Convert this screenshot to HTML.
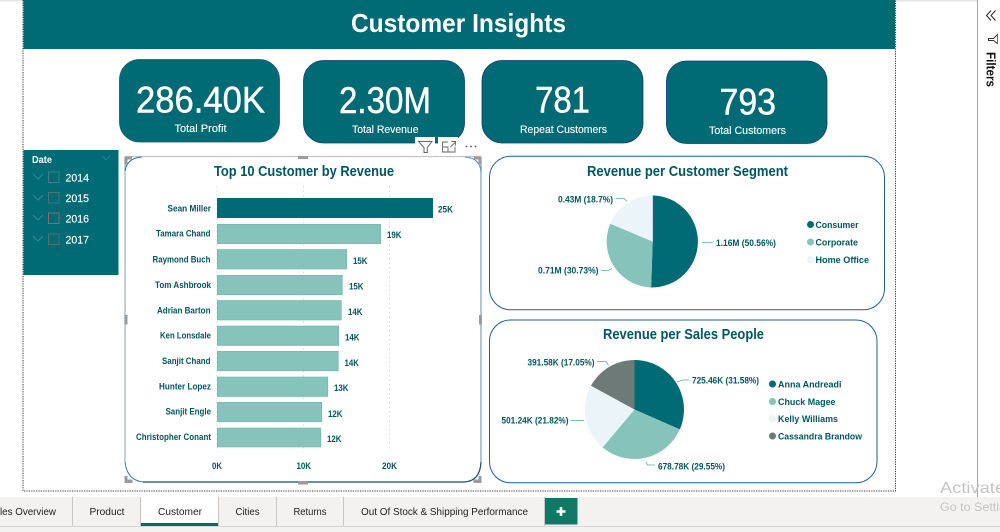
<!DOCTYPE html>
<html><head><meta charset="utf-8"><style>
html,body{margin:0;padding:0;background:#fff;width:1000px;height:532px;overflow:hidden}
svg{display:block;font-family:"Liberation Sans",sans-serif}
.k{fill:#fff;stroke:#fff;stroke-width:.45px;font-size:37px}
.l{fill:#fff;stroke:#fff;stroke-width:.12px;font-size:11px}
.y{fill:#fff;stroke:#fff;stroke-width:.15px;font-size:11px}
.t{fill:#00565f;font-weight:bold;font-size:14.5px}
.n{fill:#00565f;font-weight:bold;font-size:9px}
.v{fill:#00565f;font-weight:bold;font-size:9px}
.tab{fill:#222;font-size:10.5px}
.lead{fill:none;stroke:#5fa9a5;stroke-width:.8}
.grid{stroke:#d5d9d9;stroke-width:1;stroke-dasharray:1.5 3}
.h{fill:#9b9b9b}
</style></head><body>
<svg width="1000" height="532" viewBox="0 0 1000 532" xmlns="http://www.w3.org/2000/svg">
<rect width="1000" height="532" fill="#fff"/>
<rect x="0" y="0" width="23" height="1.5" fill="#e6e6e6"/>
<rect x="895" y="0" width="82" height="1.5" fill="#e6e6e6"/>
<!-- canvas dotted outline -->
<path d="M23 0V491H895.500V0" fill="none" stroke="#333" stroke-width="1" stroke-dasharray="1.2 1.2"/>
<!-- header -->
<rect x="23.500" y="0" width="871.500" height="49" fill="#006b75"/>
<text x="351" y="32" fill="#fff" font-size="26" font-weight="bold" textLength="215" lengthAdjust="spacingAndGlyphs">Customer Insights</text>
<!-- KPI cards -->
<rect x="119.500" y="59.500" width="160" height="82.500" rx="20" fill="#006b75" stroke="#1d4f80" stroke-width=".8"/>
<rect x="303.500" y="60.500" width="161" height="82.500" rx="20" fill="#006b75" stroke="#0c3c78" stroke-width=".8"/>
<rect x="482" y="60.500" width="161" height="82.500" rx="20" fill="#006b75" stroke="#0c3c78" stroke-width=".8"/>
<rect x="666.500" y="61" width="160.500" height="82.500" rx="20" fill="#006b75" stroke="#0c3c78" stroke-width=".8"/>
<text class="k" x="136" y="112.500" textLength="129" lengthAdjust="spacingAndGlyphs">286.40K</text>
<text class="k" x="339" y="113" textLength="92" lengthAdjust="spacingAndGlyphs">2.30M</text>
<text class="k" x="535" y="112.700" textLength="55" lengthAdjust="spacingAndGlyphs">781</text>
<text class="k" x="719.500" y="114.500" textLength="56.500" lengthAdjust="spacingAndGlyphs">793</text>
<text class="l" x="174.500" y="132" textLength="52" lengthAdjust="spacingAndGlyphs">Total Profit</text>
<text class="l" x="352" y="133" textLength="66.500" lengthAdjust="spacingAndGlyphs">Total Revenue</text>
<text class="l" x="520" y="133" textLength="87" lengthAdjust="spacingAndGlyphs">Repeat Customers</text>
<text class="l" x="709" y="134" textLength="77" lengthAdjust="spacingAndGlyphs">Total Customers</text>
<!-- slicer -->
<rect x="23.500" y="150" width="95" height="125" fill="#006b75"/>
<text x="32" y="163" fill="#fff" font-size="10" font-weight="bold" textLength="20" lengthAdjust="spacingAndGlyphs">Date</text>
<path d="M102 156l4 4 4-4" fill="none" stroke="#2c7f86" stroke-width="1"/>
<g fill="none" stroke="#3c878d" stroke-width="1">
<path d="M33 174l5 5 5-5M33 195l5 5 5-5M33 215l5 5 5-5M33 236l5 5 5-5"/>
</g>
<g fill="none" stroke-width="1">
<rect x="48.500" y="172" width="10.500" height="10.500" stroke="#4b7a7f"/>
<rect x="48.500" y="192.500" width="10.500" height="10.500" stroke="#517378"/>
<rect x="48.500" y="213" width="10.500" height="10.500" stroke="#8a6d6b"/>
<rect x="48.500" y="234" width="10.500" height="10.500" stroke="#566f74"/>
</g>
<text class="y" x="65.500" y="181.500" textLength="23.500" lengthAdjust="spacingAndGlyphs">2014</text>
<text class="y" x="65.500" y="202" textLength="23.500" lengthAdjust="spacingAndGlyphs">2015</text>
<text class="y" x="65.500" y="222.500" textLength="23.500" lengthAdjust="spacingAndGlyphs">2016</text>
<text class="y" x="65.500" y="243.500" textLength="23.500" lengthAdjust="spacingAndGlyphs">2017</text>
<!-- bar chart card -->
<path d="M125 156.500H481" stroke="#c4c4c4" stroke-width="1.200" fill="none"/>
<path d="M125 157V462" stroke="#a9bccb" stroke-width="1.400" fill="none"/>
<path d="M481 157V462" stroke="#7d9db8" stroke-width="1.200" fill="none"/>
<path d="M143 482H463Q480 482 481 462" fill="none" stroke="#0f4a80" stroke-width="1.200"/>
<path d="M125 171Q127 158 142 157" fill="none" stroke="#2f6ea5" stroke-width="1"/>
<path d="M465 157Q480 158 481 172" fill="none" stroke="#5f8cb0" stroke-width="1"/>
<path d="M125 462Q127 480 143 482" fill="none" stroke="#3d78aa" stroke-width="1"/>
<g class="h">
<path d="M124.500 156.500h7.500v3h-4.500v5h-3z"/>
<path d="M474 156.500h7.500v7.500h-3v-4.500h-4.500z"/>
<path d="M124.500 476h3v3.500h5v3.500h-8z"/>
<path d="M478.500 476h3v7h-8v-3.500h5z"/>
<rect x="298" y="156" width="10" height="3"/>
<rect x="298" y="481" width="10" height="3.500"/>
<rect x="124.500" y="315" width="3" height="9.500"/>
<rect x="479" y="315" width="3" height="9.500"/>
</g>
<!-- visual header icons -->
<rect x="415" y="137" width="20" height="19" fill="#fff"/>
<rect x="438" y="137" width="20" height="19" fill="#fff"/>
<path d="M418.500 141.500H432L427.300 147.500V152.500H424V147.500Z" fill="none" stroke="#666" stroke-width="1"/>
<path d="M448 142H442.500V152H455V146.500M450.500 147L455 142.500M451.500 141.500H455.500V145.500M442.500 147H448V152" fill="none" stroke="#666" stroke-width=".9"/>
<g fill="#555"><circle cx="466.500" cy="146.500" r=".9"/><circle cx="471" cy="146.500" r=".9"/><circle cx="475.500" cy="146.500" r=".9"/></g>
<!-- gridlines -->
<path class="grid" d="M217 186V452M303.500 186V452M389.500 186V452"/>
<text class="t" x="214" y="176" textLength="180" lengthAdjust="spacingAndGlyphs">Top 10 Customer by Revenue</text>
<!-- bars -->
<rect x="217" y="198" width="216" height="20" fill="#006b75"/>
<g fill="#85c3bb" stroke="#6fb6ad" stroke-width=".6">
<rect x="217.300" y="224.300" width="163.500" height="19.400"/>
<rect x="217.300" y="249.500" width="129.500" height="19.500"/>
<rect x="217.300" y="275.300" width="125" height="19.400"/>
<rect x="217.300" y="300.500" width="124" height="19.500"/>
<rect x="217.300" y="326" width="121.500" height="19.500"/>
<rect x="217.300" y="351.300" width="121" height="19.500"/>
<rect x="217.300" y="377" width="110.500" height="19.500"/>
<rect x="217.300" y="402.300" width="104.500" height="19.500"/>
<rect x="217.300" y="428" width="103.500" height="19"/>
</g>
<text class="n" x="167.500" y="211.500" textLength="43.500" lengthAdjust="spacingAndGlyphs">Sean Miller</text>
<text class="n" x="156" y="236.500" textLength="54.500" lengthAdjust="spacingAndGlyphs">Tamara Chand</text>
<text class="n" x="152.500" y="262.500" textLength="58" lengthAdjust="spacingAndGlyphs">Raymond Buch</text>
<text class="n" x="155" y="288" textLength="56" lengthAdjust="spacingAndGlyphs">Tom Ashbrook</text>
<text class="n" x="157" y="313.500" textLength="53.500" lengthAdjust="spacingAndGlyphs">Adrian Barton</text>
<text class="n" x="160" y="338.500" textLength="51" lengthAdjust="spacingAndGlyphs">Ken Lonsdale</text>
<text class="n" x="162" y="364" textLength="48.500" lengthAdjust="spacingAndGlyphs">Sanjit Chand</text>
<text class="n" x="159" y="389.500" textLength="52" lengthAdjust="spacingAndGlyphs">Hunter Lopez</text>
<text class="n" x="165.500" y="414.500" textLength="45.500" lengthAdjust="spacingAndGlyphs">Sanjit Engle</text>
<text class="n" x="136" y="440" textLength="75" lengthAdjust="spacingAndGlyphs">Christopher Conant</text>
<text class="v" x="438" y="212.500" textLength="15" lengthAdjust="spacingAndGlyphs">25K</text>
<text class="v" x="387" y="238" textLength="14.500" lengthAdjust="spacingAndGlyphs">19K</text>
<text class="v" x="353" y="264" textLength="14.500" lengthAdjust="spacingAndGlyphs">15K</text>
<text class="v" x="349" y="289.500" textLength="14.500" lengthAdjust="spacingAndGlyphs">15K</text>
<text class="v" x="348" y="315" textLength="14.500" lengthAdjust="spacingAndGlyphs">14K</text>
<text class="v" x="345" y="340.500" textLength="14.500" lengthAdjust="spacingAndGlyphs">14K</text>
<text class="v" x="344.500" y="366" textLength="14.500" lengthAdjust="spacingAndGlyphs">14K</text>
<text class="v" x="334" y="391" textLength="14.500" lengthAdjust="spacingAndGlyphs">13K</text>
<text class="v" x="328" y="417" textLength="14.500" lengthAdjust="spacingAndGlyphs">12K</text>
<text class="v" x="327" y="442" textLength="14.500" lengthAdjust="spacingAndGlyphs">12K</text>
<text class="v" x="212" y="469" textLength="10" lengthAdjust="spacingAndGlyphs">0K</text>
<text class="v" x="296.500" y="469" textLength="14.500" lengthAdjust="spacingAndGlyphs">10K</text>
<text class="v" x="382" y="469" textLength="15" lengthAdjust="spacingAndGlyphs">20K</text>
<!-- segment pie card -->
<rect x="489.500" y="156.300" width="395" height="153.500" rx="21" fill="#fff" stroke="#1d5f9a" stroke-width="1"/>
<text class="t" x="587" y="176" textLength="201" lengthAdjust="spacingAndGlyphs">Revenue per Customer Segment</text>
<path d="M652.700 241.500V195.500A46 46 0 0 1 651.100 287.500Z" fill="#006b75"/>
<path d="M652.700 241.500L651.100 287.500A46 46 0 0 1 610.200 223.800Z" fill="#85c3bb"/>
<path d="M652.700 241.500L610.200 223.800A46 46 0 0 1 652.700 195.500Z" fill="#ebf4f8"/>
<path class="lead" d="M616 198.500H624L627 201.500M702 242.500H712.500M601 270.500H608L612 268.500"/>
<text class="v" x="558" y="202.500" textLength="55" lengthAdjust="spacingAndGlyphs">0.43M (18.7%)</text>
<text class="v" x="716" y="246" textLength="60" lengthAdjust="spacingAndGlyphs">1.16M (50.56%)</text>
<text class="v" x="538" y="273.500" textLength="60.500" lengthAdjust="spacingAndGlyphs">0.71M (30.73%)</text>
<circle cx="810.500" cy="224.500" r="3.500" fill="#006b75"/>
<circle cx="810.500" cy="242" r="3.500" fill="#85c3bb"/>
<circle cx="810.500" cy="259.500" r="3.500" fill="#ebf4f8"/>
<text class="n" x="815.500" y="228" textLength="43" lengthAdjust="spacingAndGlyphs">Consumer</text>
<text class="n" x="815.500" y="245.500" textLength="42.500" lengthAdjust="spacingAndGlyphs">Corporate</text>
<text class="n" x="815.500" y="263" textLength="53.500" lengthAdjust="spacingAndGlyphs">Home Office</text>
<!-- sales pie card -->
<rect x="489.500" y="320" width="387.500" height="162.800" rx="21" fill="#fff" stroke="#1d5f9a" stroke-width="1"/>
<text class="t" x="603" y="339" textLength="161" lengthAdjust="spacingAndGlyphs">Revenue per Sales People</text>
<path d="M634.500 409.500V360A49.500 49.500 0 0 1 679.800 429.400Z" fill="#006b75"/>
<path d="M634.500 409.500L679.800 429.400A49.500 49.500 0 0 1 602.600 447.400Z" fill="#85c3bb"/>
<path d="M634.500 409.500L602.600 447.400A49.500 49.500 0 0 1 591 385.800Z" fill="#ebf4f8"/>
<path d="M634.500 409.500L591 385.800A49.500 49.500 0 0 1 634.500 360Z" fill="#6d7a77"/>
<path class="lead" d="M597 361.500H606L608.500 365.500M677 382L683 380H689M571 420.500H584M646 461.500L647.500 465H655"/>
<text class="v" x="527.500" y="365.500" textLength="67" lengthAdjust="spacingAndGlyphs">391.58K (17.05%)</text>
<text class="v" x="692" y="383.500" textLength="67" lengthAdjust="spacingAndGlyphs">725.46K (31.58%)</text>
<text class="v" x="501.500" y="423.500" textLength="67" lengthAdjust="spacingAndGlyphs">501.24K (21.82%)</text>
<text class="v" x="658" y="469.500" textLength="67" lengthAdjust="spacingAndGlyphs">678.78K (29.55%)</text>
<circle cx="772.500" cy="384" r="3.500" fill="#006b75"/>
<circle cx="772.500" cy="401.500" r="3.500" fill="#85c3bb"/>
<circle cx="772.500" cy="418.500" r="3.500" fill="#ebf4f8"/>
<circle cx="772.500" cy="436" r="3.500" fill="#6d7a77"/>
<text class="n" x="778" y="387.500" textLength="63.500" lengthAdjust="spacingAndGlyphs">Anna Andreadi</text>
<text class="n" x="778" y="405" textLength="57.500" lengthAdjust="spacingAndGlyphs">Chuck Magee</text>
<text class="n" x="778" y="422" textLength="60" lengthAdjust="spacingAndGlyphs">Kelly Williams</text>
<text class="n" x="778" y="439.500" textLength="84" lengthAdjust="spacingAndGlyphs">Cassandra Brandow</text>
<!-- tab bar -->
<rect x="0" y="497" width="1000" height="35" fill="#f3f2f1"/>
<rect x="0" y="526" width="1000" height="1" fill="#d6d6d6"/>
<rect x="141" y="497" width="77.500" height="29" fill="#fff"/>
<rect x="141" y="523" width="77.500" height="3" fill="#0a6b5a"/>
<path d="M72.500 497V526M140.500 497V526M218.500 497V526M276.500 497V526M343.500 497V526M544.500 497V526" stroke="#c8c6c4" stroke-width="1" fill="none"/>
<text class="tab" x="0" y="515" textLength="56" lengthAdjust="spacingAndGlyphs">les Overview</text>
<text class="tab" x="89.500" y="515" textLength="35" lengthAdjust="spacingAndGlyphs">Product</text>
<text class="tab" x="158" y="515" textLength="44" lengthAdjust="spacingAndGlyphs">Customer</text>
<text class="tab" x="235.500" y="515" textLength="24" lengthAdjust="spacingAndGlyphs">Cities</text>
<text class="tab" x="293.500" y="515" textLength="33" lengthAdjust="spacingAndGlyphs">Returns</text>
<text class="tab" x="361" y="515" textLength="167" lengthAdjust="spacingAndGlyphs">Out Of Stock &amp; Shipping Performance</text>
<rect x="545" y="498" width="32.500" height="26.500" fill="#117865"/>
<path d="M556.500 511.500H565.500M561 507V516" stroke="#fff" stroke-width="2.600" fill="none"/>
<!-- right panel -->
<path d="M977.500 0V497" stroke="#a6a6a6" stroke-width="1" fill="none"/>
<path d="M991 10.500L986.500 15.500L991 20.500M995.500 10.500L991 15.500L995.500 20.500" fill="none" stroke="#222" stroke-width="1"/>
<path d="M997.500 34.500V43.500L993.500 40.500H988.500V38.500H993.500Z" fill="none" stroke="#333" stroke-width="1"/>
<path d="M997.500 34.500V43.500" stroke="#8a6a3a" stroke-width="1"/>
<text transform="translate(986.500 52) rotate(90)" fill="#111" font-size="12.500" font-weight="bold" textLength="35" lengthAdjust="spacingAndGlyphs">Filters</text>
<!-- activate -->
<text x="940" y="493" fill="#c4c4c4" font-size="16" textLength="65" lengthAdjust="spacingAndGlyphs">Activate</text>
<text x="940" y="511" fill="#c4c4c4" font-size="12" textLength="66" lengthAdjust="spacingAndGlyphs">Go to Settin</text>
</svg>
</body></html>
